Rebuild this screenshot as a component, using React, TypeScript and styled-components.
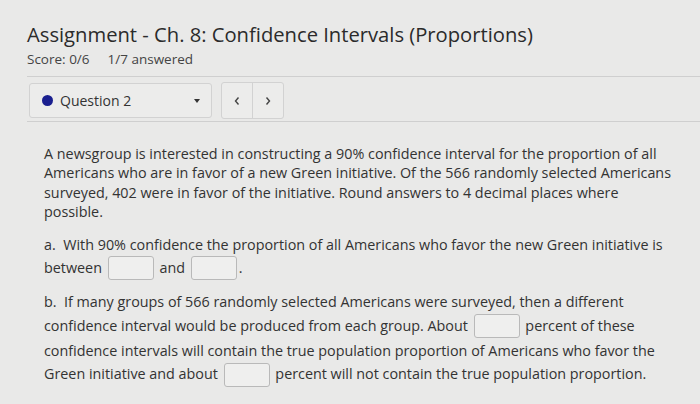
import React from "react";
import styled, { createGlobalStyle } from "styled-components";

const GlobalStyle = createGlobalStyle`
  html, body {
    margin: 0;
    padding: 0;
    background: #e9e9e8;
  }
  body {
    font-family: "Open Sans", "Liberation Sans", sans-serif;
    color: #333;
  }
`;

const Page = styled.div`
  width: 700px;
  height: 404px;
  overflow: hidden;
  padding: 20px 0 0 27px;
  box-sizing: border-box;
`;

const Title = styled.h1`
  margin: 0;
  font-size: 20.2px;
  font-weight: 400;
  line-height: 28px;
  color: #2b2b2b;
`;

const ScoreLine = styled.div`
  display: flex;
  gap: 18px;
  font-size: 13.5px;
  line-height: 20px;
  margin-top: 1px;
  color: #444;
`;

const Toolbar = styled.div`
  display: flex;
  align-items: center;
  gap: 9px;
  margin-top: 7px;
  padding: 5px 0 2px 2px;
  border-top: 1px solid #cfcfcf;
  border-bottom: 1px solid #cfcfcf;
`;

const Select = styled.div`
  width: 183px;
  height: 35px;
  box-sizing: border-box;
  display: flex;
  align-items: center;
  padding: 0 8px 0 12px;
  border: 1px solid #d2d2d2;
  border-radius: 3px;
  background: #ececeb;
  font-size: 14px;
  color: #333;
`;

const Dot = styled.span`
  width: 11px;
  height: 11px;
  border-radius: 50%;
  background: #1a1f8f;
  margin-right: 7px;
`;

const Caret = styled.span`
  margin-left: auto;
  margin-right: 3px;
  width: 0;
  height: 0;
  border-left: 3.5px solid transparent;
  border-right: 3.5px solid transparent;
  border-top: 4px solid #333;
`;

const NavGroup = styled.div`
  display: flex;
  height: 35px;
  border: 1px solid #d2d2d2;
  border-radius: 3px;
  background: #ececeb;
`;

const NavButton = styled.div<{ $divider?: boolean }>`
  width: 30px;
  display: flex;
  align-items: center;
  justify-content: center;
  color: #444;
  border-right: ${(p) => (p.$divider ? "1px solid #d2d2d2" : "none")};
`;

const Body = styled.div`
  padding: 22px 0 0 17px;
  width: 640px;
  font-size: 14.35px;
  color: #333;
`;

const Para = styled.p`
  margin: 0;
  line-height: 19.4px;
`;

const Part = styled.p<{ $top: number }>`
  margin: ${(p) => p.$top}px 0 0;
  line-height: 23.5px;
`;

const Blank = styled.span`
  display: inline-block;
  width: 46px;
  height: 24px;
  box-sizing: border-box;
  border: 1px solid #b9b9b9;
  border-radius: 3px;
  background: #efefee;
  vertical-align: middle;
  margin: 0 2px;
  position: relative;
  top: -1px;
`;

const Chevron = ({ dir }: { dir: "left" | "right" }) => (
  <svg width="8" height="10" viewBox="0 0 8 10" fill="none" stroke="#444" strokeWidth="1.4">
    <path d={dir === "left" ? "M5.5 1.5 L2.5 5 L5.5 8.5" : "M2.5 1.5 L5.5 5 L2.5 8.5"} />
  </svg>
);

export default function App() {
  return (
    <>
      <GlobalStyle />
      <Page>
        <Title>Assignment - Ch. 8: Confidence Intervals (Proportions)</Title>
        <ScoreLine>
          <span>Score: 0/6</span>
          <span>1/7 answered</span>
        </ScoreLine>
        <Toolbar>
          <Select>
            <Dot />
            Question 2
            <Caret />
          </Select>
          <NavGroup>
            <NavButton $divider>
              <Chevron dir="left" />
            </NavButton>
            <NavButton>
              <Chevron dir="right" />
            </NavButton>
          </NavGroup>
        </Toolbar>
        <Body>
          <Para>
            A newsgroup is interested in constructing a 90% confidence interval for the proportion of all
            <br />
            Americans who are in favor of a new Green initiative. Of the 566 randomly selected Americans
            <br />
            surveyed, 402 were in favor of the initiative. Round answers to 4 decimal places where
            <br />
            possible.
          </Para>
          <Part $top={11}>
            a.&nbsp; With 90% confidence the proportion of all Americans who favor the new Green initiative is
            <br />
            between <Blank /> and <Blank />.
          </Part>
          <Part $top={9}>
            b.&nbsp; If many groups of 566 randomly selected Americans were surveyed, then a different
            <br />
            confidence interval would be produced from each group. About <Blank /> percent of these
            <br />
            confidence intervals will contain the true population proportion of Americans who favor the
            <br />
            Green initiative and about <Blank /> percent will not contain the true population proportion.
          </Part>
        </Body>
      </Page>
    </>
  );
}
